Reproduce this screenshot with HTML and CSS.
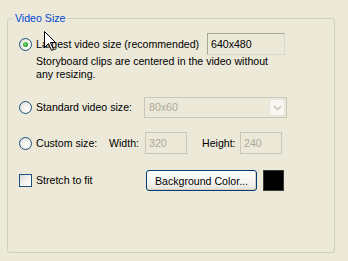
FILE: index.html
```html
<!DOCTYPE html>
<html>
<head>
<meta charset="utf-8">
<link rel="stylesheet" href="styles.css">
</head>
<body>
<div class="page">
  <fieldset class="group">
    <legend class="group-title">Video Size</legend>

    <div class="row row-largest">
      <span class="radio checked"></span>
      <span class="label first">Largest video size (recommended)</span>
      <span class="edit readonly">640x480</span>
      <div class="desc">Storyboard clips are centered in the video without<br>any resizing.</div>
    </div>

    <div class="row row-standard">
      <span class="radio"></span>
      <span class="label first">Standard video size:</span>
      <span class="combo">
        <span class="combo-text">80x60</span>
        <span class="combo-btn">
          <svg width="9" height="6" viewBox="0 0 9 6"><path d="M1 1 L4.5 4.5 L8 1" fill="none" stroke="#C9C7BA" stroke-width="1.6"/></svg>
        </span>
      </span>
    </div>

    <div class="row row-custom">
      <span class="radio"></span>
      <span class="label first">Custom size:</span>
      <span class="label">Width:</span>
      <span class="edit disabled">320</span>
      <span></span>
      <span class="label">Height:</span>
      <span class="edit disabled">240</span>
    </div>

    <div class="row row-stretch">
      <span class="checkbox"></span>
      <span class="label first">Stretch to fit</span>
      <button class="button" type="button">Background Color...</button>
      <span class="swatch"></span>
    </div>
  </fieldset>
</div>

<svg class="cursor" width="13" height="21" viewBox="0 0 13 21">
  <path d="M0.5 0.5 L0.5 16.5 L4.5 12.5 L7.5 19.5 L9.5 18.5 L6.5 11.5 L11.5 11.5 Z" fill="#fff" stroke="#000" stroke-width="1" stroke-linejoin="miter"/>
</svg>
</body>
</html>
```

FILE: styles.css
```css
* { box-sizing: border-box; }

html, body {
  margin: 0;
  padding: 0;
  background: #ECE9D8;
}

body {
  font-family: "Liberation Sans", Arial, sans-serif;
  font-size: 10.6px;
  color: #000;
  width: 348px;
  height: 261px;
  overflow: hidden;
  position: relative;
}

.page {
  height: 261px;
  padding: 12px 13px 8px 7px;
  display: flex;
  flex-direction: column;
}

.group {
  flex: 1;
  margin: 0;
  padding: 0 0 0 11px;
  border: 1px solid #D0D0BF;
  border-radius: 3px;
  min-width: 0;
}

.group-title {
  color: #0046D5;
  padding: 0 2px;
  margin-left: -6px;
  line-height: 13px;
}

.row {
  display: grid;
  align-items: center;
}

.label {
  white-space: nowrap;
  line-height: 13px;
}

.label.first { padding-left: 4px; }

.radio {
  width: 13px;
  height: 13px;
  border-radius: 50%;
  border: 1px solid #1C5180;
  background: radial-gradient(circle at 65% 65%, #FFFFFF 0%, #F4F3EE 40%, #DCDBD3 100%);
  position: relative;
}

.radio.checked::after {
  content: "";
  position: absolute;
  left: 3px;
  top: 3px;
  width: 5px;
  height: 5px;
  border-radius: 50%;
  background: radial-gradient(circle at 40% 40%, #7FE07F 0%, #2FA82F 55%, #1A7E1A 100%);
}

.checkbox {
  width: 13px;
  height: 13px;
  border: 1px solid #1C5180;
  background: linear-gradient(135deg, #DCDBD3 0%, #F2F1EC 50%, #FFFFFF 100%);
}

.edit {
  height: 22px;
  line-height: 20px;
  padding: 0 3px;
  border: 1px solid #C9C7BA;
  white-space: nowrap;
}

.edit.readonly {
  border-color: #A8A796 #DAD8C8 #DAD8C8 #A8A796;
  color: #000;
}

.edit.disabled {
  color: #ACA899;
}

/* Row 1 */
.row-largest {
  margin-top: 8px;
  grid-template-columns: 13px 175px 78px;
  align-items: start;
}
.row-largest .radio { margin-top: 5px; }
.row-largest > .label { line-height: 22px; }
.row-largest .desc {
  grid-column: 2 / 4;
  padding-left: 4px;
  line-height: 13px;
  white-space: nowrap;
}

/* Row 2 */
.row-standard {
  margin-top: 16px;
  grid-template-columns: 13px 112px 143px;
}

.combo {
  height: 21px;
  border: 1px solid #C9C7BA;
  display: flex;
  align-items: stretch;
  padding: 1px;
}
.combo-text {
  flex: 1;
  color: #ACA899;
  padding-left: 3px;
  line-height: 17px;
}
.combo-btn {
  width: 16px;
  background: #F7F6F2;
  border: 1px solid #E6E4D8;
  border-radius: 2px;
  display: flex;
  align-items: center;
  justify-content: center;
}

/* Row 3 */
.row-custom {
  margin-top: 14px;
  grid-template-columns: 13px 77px 36px 42px 15px 38px 42px;
}

/* Row 4 */
.row-stretch {
  margin-top: 16px;
  grid-template-columns: 13px 114px 111px 21px;
  align-items: stretch;
  height: 21px;
}
.row-stretch .checkbox,
.row-stretch .label { align-self: center; }

.button {
  height: 21px;
  margin: 0;
  padding: 0;
  font: inherit;
  color: #000;
  border: 1px solid #003C74;
  border-radius: 3px;
  background: linear-gradient(#FFFFFF 0%, #F5F4EF 60%, #E3E1D6 100%);
  box-shadow: inset -1px -1px 0 #D6D0C5;
  align-self: end;
}

.swatch {
  width: 21px;
  height: 21px;
  margin-left: 6px;
  background: #000;
  border: 1px solid #3A3A3A;
  align-self: start;
}

.cursor {
  position: absolute;
  left: 44px;
  top: 31px;
}
```
